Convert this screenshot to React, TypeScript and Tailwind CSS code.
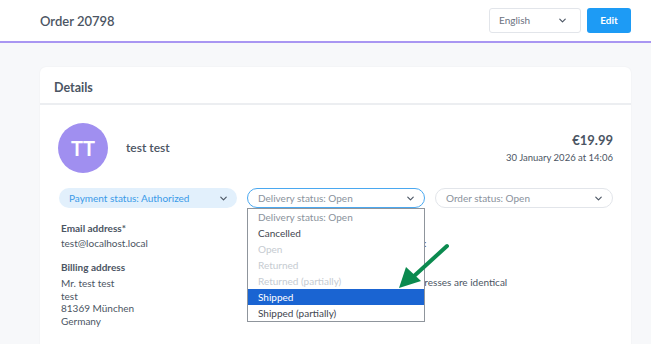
import { ChevronDown } from 'lucide-react';

const font = { fontFamily: 'Lato, "Liberation Sans", sans-serif' };

const options = [
  { label: 'Delivery status: Open', tone: 'text-[#8a929c]' },
  { label: 'Cancelled', tone: 'text-[#3f4650]' },
  { label: 'Open', tone: 'text-[#c6cbd1]' },
  { label: 'Returned', tone: 'text-[#c6cbd1]' },
  { label: 'Returned (partially)', tone: 'text-[#c6cbd1]' },
  { label: 'Shipped', tone: 'bg-[#1a64d2] text-white' },
  { label: 'Shipped (partially)', tone: 'text-[#3f4650]' },
];

const Pill = ({ label, className }: { label: string; className: string }) => (
  <div className={`h-[20px] rounded-full flex items-center justify-between pl-[10px] pr-[8px] text-[10px] ${className}`}>
    <span>{label}</span>
    <ChevronDown className="w-[11px] h-[11px] text-[#4b5563]" strokeWidth={2.5} />
  </div>
);

const App = () => {
  return <div style={font} className="w-[651px] h-[344px] overflow-hidden bg-[#f7f8fa] text-[#4b5563]">
      <header className="h-[43px] bg-white border-b-2 border-[#a996f2] flex items-center justify-between pl-[40px] pr-[20px]">
        <h1 className="text-[13px] font-semibold text-[#4b5563] mt-[2px]">Order 20798</h1>
        <div className="flex items-center gap-[6px]">
          <div className="w-[92px] h-[25px] border border-[#e2e5ea] rounded-[3px] flex items-center justify-between pl-[9px] pr-[12px] text-[10px] text-[#6b7280]">
            <span>English</span>
            <ChevronDown className="w-[11px] h-[11px] text-[#4b5563]" strokeWidth={2.5} />
          </div>
          <button className="w-[44px] h-[25px] rounded-[3px] bg-[#1d9bf5] text-white text-[10px] font-bold">Edit</button>
        </div>
      </header>

      <main className="pl-[40px] pr-[20px] pt-[24px]">
        <section className="bg-white rounded-[6px] shadow-[0_0_2px_rgba(0,0,0,0.06)] h-[300px]">
          <div className="h-[38px] px-[14px] pt-[6px] flex items-center border-b-2 border-[#eceef1]">
            <h2 className="text-[12.5px] font-bold text-[#4b5563]">Details</h2>
          </div>

          <div className="pl-[18px] pr-[18px] pt-[18px]">
            <div className="flex items-center justify-between">
              <div className="flex items-center gap-[18px]">
                <div className="w-[50px] h-[50px] rounded-full bg-[#a08ff0] flex items-center justify-center text-white text-[20px] font-bold">TT</div>
                <span className="text-[12px] font-semibold text-[#4b5563]">test test</span>
              </div>
              <div className="text-right">
                <div className="text-[13px] font-bold text-[#4b5563]">€19.99</div>
                <div className="text-[9.5px] text-[#4b5563] mt-[1px]">30 January 2026 at 14:06</div>
              </div>
            </div>

            <div className="grid grid-cols-3 gap-[10px] mt-[15px] pl-[1px]">
              <Pill label="Payment status: Authorized" className="bg-[#e2f0fc] text-[#3a9ae8]" />
              <div className="relative">
                <Pill label="Delivery status: Open" className="border border-[#4aa8f0] text-[#8a929c] bg-white" />
                <ul className="absolute left-0 top-[20px] w-[178px] border border-[#8f959c] bg-white z-10 text-[10px]">
                  {options.map(o => <li key={o.label} className={`h-[16px] flex items-center pl-[10px] ${o.tone}`}>{o.label}</li>)}
                </ul>
              </div>
              <Pill label="Order status: Open" className="border border-[#e2e5ea] text-[#8a929c] bg-white" />
            </div>

            <div className="grid grid-cols-[230px_1fr] mt-[14px] pl-[3px] text-[10px] leading-[12.5px]">
              <div>
                <div className="font-bold">Email address*</div>
                <div className="mt-[2px]">test@localhost.local</div>
                <div className="font-bold mt-[12px]">Billing address</div>
                <div className="mt-[3.5px]">
                  <div>Mr. test test</div>
                  <div>test</div>
                  <div>81369 München</div>
                  <div>Germany</div>
                </div>
              </div>
              <div className="pl-[15px]">
                <div className="font-bold">Phone number</div>
                <div className="mt-[2px]">+49 89 12345678 000000:</div>
                <div className="font-bold mt-[12px] invisible">Shipping address</div>
                <div className="mt-[2px] flex items-center gap-[5px]">
                  <span className="w-[10px] h-[10px] border border-[#c0c6cc] rounded-[2px]" />
                  <span>Billing and shipping addresses are identical</span>
                </div>
              </div>
            </div>
          </div>
        </section>
      </main>

      <svg className="absolute left-[395px] top-[240px] z-20" width="60" height="55" viewBox="0 0 60 55">
        <line x1="52" y1="6" x2="18" y2="37" stroke="#0b8a4f" strokeWidth="4" strokeLinecap="round" />
        <polygon points="4,48 11,27 26,41" fill="#0b8a4f" />
      </svg>
    </div>;
};
export default App;
